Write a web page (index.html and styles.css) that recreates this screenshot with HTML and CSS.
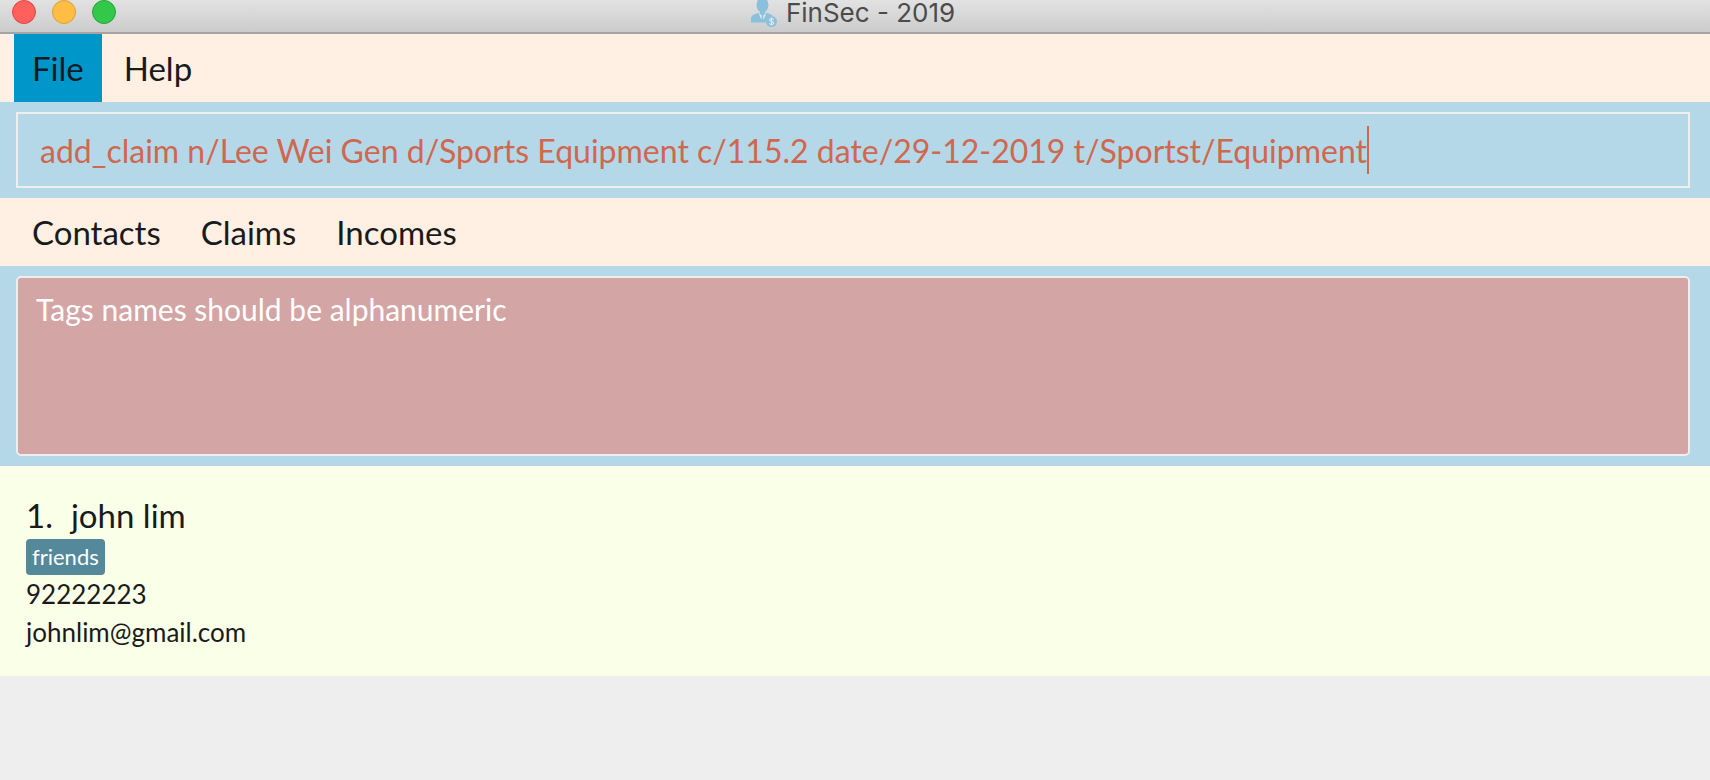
FILE: index.html
```html
<!DOCTYPE html>
<html lang="en">
<head>
<meta charset="utf-8">
<title>FinSec - 2019</title>
<link rel="stylesheet" href="styles.css">
</head>
<body>
<header class="titlebar">
  <div class="lights">
    <button class="light light-close" aria-label="Close"></button>
    <button class="light light-minimize" aria-label="Minimize"></button>
    <button class="light light-zoom" aria-label="Zoom"></button>
  </div>
  <h1 class="title">
    <svg class="app-icon" viewBox="0 0 26 29" aria-hidden="true">
      <ellipse cx="11.500" cy="5" rx="6" ry="7.500" fill="#8bc0dd"/>
      <path d="M9 10h5v5l-2.500 2L9 15z" fill="#8bc0dd"/>
      <path d="M0 22.500V19c0-3 2-4.700 7.800-6L11.500 16l3.700-3c3.500.7 5.500 1.600 6.600 3.200-4.300-.3-7.300 2.500-7.100 6.300z" fill="#8bc0dd"/>
      <path d="M7.800 13.500l3.700 9 3.700-9-3.700 2z" fill="#e2e8ec"/>
      <path d="M10.500 15h2l-.4 2 1 3.500-1.600 2-1.600-2 1-3.500z" fill="#8bc0dd"/>
      <circle cx="20.500" cy="21.500" r="5.500" fill="#8bc0dd"/>
      <path d="M22.600 19.800c-.3-1.700-4-1.700-4 .1 0 2 4.100 1 4.100 3.200 0 1.900-3.900 1.900-4.300 0M20.600 17.600v7.800" fill="none" stroke="#dfe8ed" stroke-width="1.100"/>
    </svg>
    <span>FinSec - 2019</span>
  </h1>
</header>
<nav class="bar menu" aria-label="Application">
  <button class="bar-item selected">File</button>
  <button class="bar-item">Help</button>
</nav>
<section class="pane">
  <label class="command">
    <input class="command-input" type="text" aria-label="Command" spellcheck="false" value="add_claim n/Lee Wei Gen d/Sports Equipment c/115.2 date/29-12-2019 t/Sportst/Equipment">
    <span class="caret"></span>
  </label>
</section>
<nav class="bar tabs" aria-label="Views">
  <button class="bar-item">Contacts</button>
  <button class="bar-item">Claims</button>
  <button class="bar-item">Incomes</button>
</nav>
<section class="pane">
  <output class="result">Tags names should be alphanumeric</output>
</section>
<main class="list">
  <article class="person">
    <h2 class="name"><span>1.</span><span>john lim</span></h2>
    <span class="tag">friends</span>
    <p class="detail">92222223</p>
    <p class="detail">johnlim@gmail.com</p>
  </article>
</main>
</body>
</html>
```
FILE: styles.css
```css
* {
  box-sizing: border-box;
}

body {
  margin: 0;
  min-height: 100vh;
  background: #eeeeee;
  color: #1a1a1a;
  font-family: Lato, "Open Sans", sans-serif;
}

button,
input {
  margin: 0;
  border: 0;
  font: inherit;
  color: inherit;
}

.titlebar {
  display: grid;
  grid-template-columns: 1fr auto 1fr;
  height: 34px;
  border-bottom: 2px solid #a6a4a5;
  background: linear-gradient(#e2e2e2, #cccccc);
}

.lights {
  display: flex;
  gap: 16px;
  padding-left: 12px;
}

.light {
  width: 24px;
  height: 24px;
  padding: 0;
  border: 1px solid;
  border-radius: 50%;
}

.light-close {
  background: #ff605c;
  border-color: #de4744;
}

.light-minimize {
  background: #ffbd44;
  border-color: #dd9f36;
}

.light-zoom {
  background: #34c84a;
  border-color: #25a536;
}

.title {
  display: flex;
  gap: 9px;
  margin: 0;
  padding-right: 4px;
  color: #4b4b4b;
  font: 400 26px/26px Inter, sans-serif;
}

.app-icon {
  width: 26px;
  height: 29px;
}

.bar {
  display: flex;
  height: 68px;
  padding-left: 14px;
  background: #fff0e3;
}

.bar-item {
  padding: 0 18px;
  background: transparent;
  font-size: 33px;
  line-height: 68px;
}

.menu {
  gap: 4px;
}

.tabs {
  gap: 4px;
}

.selected {
  background: #0096c9;
  color: #0d1a1f;
}

.pane {
  padding: 10px 20px 10px 16px;
  background: #b5d8e8;
}

.command {
  display: flex;
  align-items: center;
  height: 76px;
  padding-left: 22px;
  border: 2px solid #eeeeee;
  color: #d0674f;
  font-size: 32px;
}

.command-input {
  field-sizing: content;
  padding: 0;
  background: transparent;
  outline: 0;
}

.caret {
  width: 2px;
  height: 48px;
  background: #d0674f;
}

.result {
  display: block;
  height: 180px;
  padding: 13px 18px;
  border: 2px solid #eeeeee;
  border-radius: 5px;
  background: #d3a5a5;
  color: #ffffff;
  font-size: 30px;
  line-height: 36px;
}

.list {
  background: #faffe8;
}

.person {
  padding: 29px 26px 25px;
}

.name {
  display: flex;
  gap: 18px;
  margin: 0;
  padding-bottom: 4px;
  font-size: 33px;
  font-weight: 400;
  line-height: 40px;
}

.tag {
  display: block;
  width: fit-content;
  padding: 0 6px;
  border-radius: 4px;
  background: #53899b;
  color: #ffffff;
  font-size: 22px;
  line-height: 36px;
}

.detail {
  margin: 0;
  font-size: 26px;
  line-height: 38px;
}
```
